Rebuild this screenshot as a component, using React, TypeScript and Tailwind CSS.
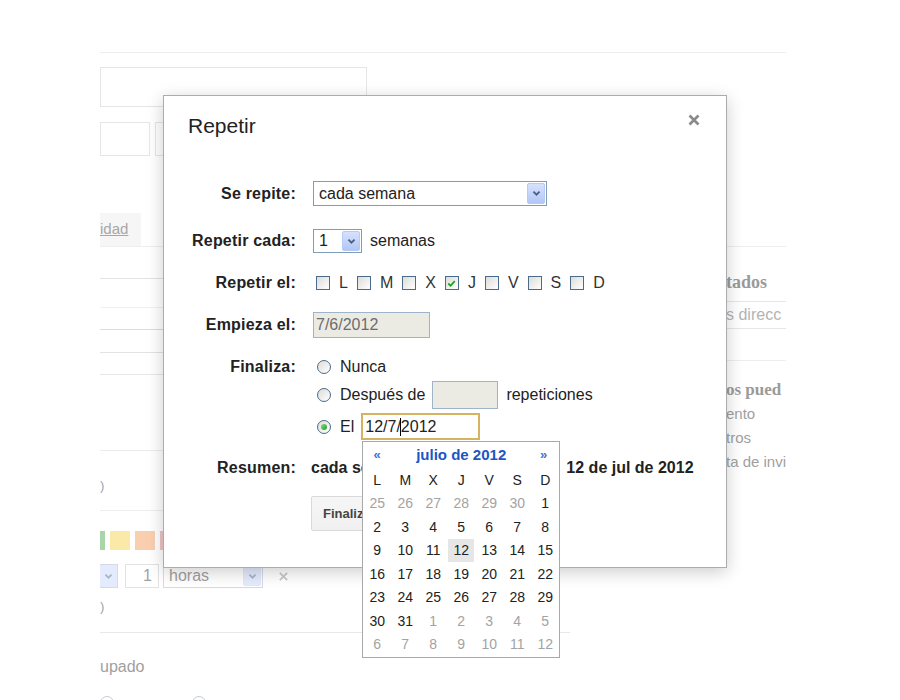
import clsx from "clsx";

const days: { n: number; muted?: boolean; today?: boolean }[][] = [
  [25, 26, 27, 28, 29, 30].map((n) => ({ n, muted: true })).concat([{ n: 1 }]),
  [2, 3, 4, 5, 6, 7, 8].map((n) => ({ n })),
  [9, 10, 11, 12, 13, 14, 15].map((n) => ({ n, today: n === 12 })),
  [16, 17, 18, 19, 20, 21, 22].map((n) => ({ n })),
  [23, 24, 25, 26, 27, 28, 29].map((n) => ({ n })),
  [{ n: 30 }, { n: 31 }].concat([1, 2, 3, 4, 5].map((n) => ({ n, muted: true }))),
  [6, 7, 8, 9, 10, 11, 12].map((n) => ({ n, muted: true })),
];

function Chevron({ className }: { className?: string }) {
  return (
    <svg viewBox="0 0 10 8" width="9" height="7" className={className}>
      <path d="M1.5 1.8 L5 5.3 L8.5 1.8" fill="none" stroke="currentColor" strokeWidth="2.2" />
    </svg>
  );
}

function XpSelect({ className, text, faded }: { className: string; text: string; faded?: boolean }) {
  return (
    <div className={clsx("flex items-stretch border bg-white p-px", faded ? "border-[#d4dbe6]" : "border-[#7f9db9]", className)}>
      <span className={clsx("flex flex-1 items-center pl-[4px] text-[16px]", faded ? "text-[#a0a0a0]" : "text-[#222]")}>{text}</span>
      <span
        className={clsx(
          "flex w-[18px] items-center justify-center rounded-[2px] border",
          faded
            ? "border-[#e0e8fb] bg-[#e4ebfd] text-[#aab6cc]"
            : "border-[#b7caf5] bg-gradient-to-b from-[#d6e1fe] to-[#b3c7f6] text-[#4d6185]"
        )}
      >
        <Chevron />
      </span>
    </div>
  );
}

function Checkbox({ checked }: { checked?: boolean }) {
  return (
    <span className="flex h-[14px] w-[14px] items-center justify-center border border-[#4b6b8c] bg-gradient-to-br from-[#dcdcd7] to-white">
      {checked && (
        <svg viewBox="0 0 12 12" width="11" height="11">
          <path d="M2.5 6 L5 8.5 L9.5 3.5" fill="none" stroke="#21a121" strokeWidth="2" />
        </svg>
      )}
    </span>
  );
}

function Radio({ checked }: { checked?: boolean }) {
  return (
    <span className="flex h-[14px] w-[14px] items-center justify-center rounded-full border border-[#4b6b8c] bg-gradient-to-br from-[#dcdcd7] to-white">
      {checked && <span className="h-[6px] w-[6px] rounded-full bg-gradient-to-br from-[#7be07b] to-[#1f9a1f]" />}
    </span>
  );
}

function Label({ children }: { children: string }) {
  return <div className="w-[132px] shrink-0 text-right text-[16px] font-bold tracking-[0.2px] text-[#222]">{children}</div>;
}

function Calendar() {
  return (
    <div className="absolute -left-[1px] top-[26px] z-10 w-[198px] border border-[#a9a9a9] bg-white">
      <div className="grid h-[26px] grid-cols-7 items-center text-center">
        <span className="text-[13px] font-bold text-[#3f72d0]">«</span>
        <span className="col-span-5 text-[15px] font-bold text-[#1c55c4]">julio de 2012</span>
        <span className="pr-[3px] text-[13px] font-bold text-[#3f72d0]">»</span>
      </div>
      <div className="grid h-[24px] grid-cols-7 items-center text-center text-[14px] text-[#222]">
        {["L", "M", "X", "J", "V", "S", "D"].map((d) => (
          <span key={d}>{d}</span>
        ))}
      </div>
      {days.map((week, i) => (
        <div key={i} className="grid h-[23.5px] grid-cols-7 text-center text-[14px]">
          {week.map((d, j) => (
            <span key={j} className="flex items-center justify-center">
              <span
                className={clsx(
                  "flex h-[23px] w-[26px] items-center justify-center",
                  d.muted ? "text-[#a3a3a3]" : "text-[#222]",
                  d.today && "bg-[#e6e6e6]"
                )}
              >
                {d.n}
              </span>
            </span>
          ))}
        </div>
      ))}
    </div>
  );
}

function Background() {
  return (
    <div className="pl-[100px] pt-[52px]">
      <div className="flex w-[686px] border-t border-[#eeeeee]">
        <div className="w-[470px] overflow-hidden text-[#9f9f9f]">
          <div className="mt-[14px] h-[40px] w-[267px] border border-[#e6e6e6]" />
          <div className="mt-[15px] flex gap-[5px]">
            <div className="h-[34px] w-[50px] border border-[#e6e6e6]" />
            <div className="h-[34px] w-[60px] border border-[#e6e6e6]" />
          </div>
          <div className="mt-[57px] h-[34px] border-b border-[#eeeeee]">
            <div className="flex h-full w-[41px] items-center bg-[#f6f6f6] text-[15px] text-[#a6a6a6] underline">idad</div>
          </div>
          <div className="h-[32px] border-b border-[#e3e3e3]" />
          <div className="h-[29px] border-b border-[#f0f0f0]" />
          <div className="h-[22px] border-b border-[#d7dde6]" />
          <div className="h-[23px] border-b border-[#e3e3e3]" />
          <div className="h-[22px] border-b border-[#e6e6e6]" />
          <div className="h-[76px] border-b border-[#ececec]" />
          <div className="h-[60px] border-b border-[#eeeeee] pt-[25px] text-[13px] leading-[20px] text-[#9aa3b5]">)</div>
          <div className="-ml-[15px] mt-[20px] flex gap-[5px]">
            <div className="h-[19px] w-[20px] bg-[#a8d6a8]" />
            <div className="h-[19px] w-[20px] bg-[#fbe9a7]" />
            <div className="h-[19px] w-[20px] bg-[#f9cfb0]" />
            <div className="h-[19px] w-[20px] bg-[#f0c4c4]" />
          </div>
          <div className="mt-[14px] flex h-[24px] items-stretch">
            <div className="flex w-[18px] items-center justify-center border-y border-r border-[#d4dbe6] bg-[#e4ebfd] text-[#aab6cc]">
              <Chevron />
            </div>
            <div className="ml-[7px] flex w-[34px] items-center justify-end border border-[#e2e2e2] pr-[6px] text-[16px]">1</div>
            <XpSelect className="ml-[4px] w-[100px]" text="horas" faded />
            <div className="ml-[15px] flex items-center">
              <svg viewBox="0 0 12 12" width="11" height="11">
                <path d="M2 2 L10 10 M10 2 L2 10" stroke="#c9c9c9" strokeWidth="2" />
              </svg>
            </div>
          </div>
          <div className="h-[45px] border-b border-[#e8e8e8] pt-[9px] text-[13px] leading-[20px] text-[#9aa3b5]">)</div>
          <div className="mt-[22px] text-[16px] leading-[24px]">upado</div>
          <div className="mt-[17px] flex gap-[78px]">
            <span className="h-[14px] w-[14px] rounded-full border border-[#c3cad6]" />
            <span className="h-[14px] w-[14px] rounded-full border border-[#c3cad6]" />
          </div>
        </div>
        <div className="ml-auto w-[60px] overflow-hidden whitespace-nowrap text-[#9f9f9f]">
          <div className="h-[194px] border-b border-[#eeeeee]" />
          <div className="h-[55px] border-b border-[#e6e6e6] pt-[23px] font-['Liberation_Serif',serif] text-[18px] font-bold leading-[24px] text-[#9a9a9a]">
            tados
          </div>
          <div className="h-[27px] border-b border-[#e6e6e6] text-[16px] leading-[26px] text-[#b3b3b3]">s direcc</div>
          <div className="h-[32px] border-b border-[#eeeeee]" />
          <div className="pt-[17px] text-[15px] leading-[24px]">
            <div className="font-['Liberation_Serif',serif] text-[17px] font-bold text-[#9a9a9a]">os pued</div>
            <div>ento</div>
            <div>tros</div>
            <div>ta de invi</div>
          </div>
        </div>
      </div>
    </div>
  );
}

export default function App() {
  return (
    <div className="relative h-[700px] w-[900px] overflow-hidden bg-white font-['Liberation_Sans',Arial,sans-serif]">
      <Background />

      <div className="absolute left-[163px] top-[95px] h-[473px] w-[564px] border border-[#acacac] bg-white shadow-[0_4px_16px_rgba(0,0,0,0.2)]">
        <div className="flex items-start justify-between pl-[24px] pr-[25px] pt-[18px]">
          <h2 className="text-[21px] leading-[24px] text-[#222]">Repetir</h2>
          <svg viewBox="0 0 14 14" width="14" height="14" className="-mt-[1px]">
            <path d="M2.5 2.5 L11.5 11.5 M11.5 2.5 L2.5 11.5" stroke="#8a8a8a" strokeWidth="2.6" />
          </svg>
        </div>

        <div className="mt-[43px] flex h-[25px] items-center">
          <Label>Se repite:</Label>
          <XpSelect className="ml-[17px] h-[25px] w-[234px]" text="cada semana" />
        </div>

        <div className="mt-[23px] flex h-[24px] items-center">
          <Label>Repetir cada:</Label>
          <XpSelect className="ml-[17px] h-[24px] w-[49px]" text="1" />
          <span className="ml-[8px] text-[16px] text-[#222]">semanas</span>
        </div>

        <div className="mt-[18px] flex h-[24px] items-center">
          <Label>Repetir el:</Label>
          <div className="ml-[20px] flex items-center text-[16px] text-[#333]">
            {["L", "M", "X", "J", "V", "S", "D"].map((d) => (
              <span key={d} className="flex items-center">
                <Checkbox checked={d === "J"} />
                <span className="ml-[9px] mr-[9px]">{d}</span>
              </span>
            ))}
          </div>
        </div>

        <div className="mt-[17px] flex h-[26px] items-center">
          <Label>Empieza el:</Label>
          <div className="ml-[17px] flex h-[26px] w-[117px] items-center border border-[#9fb3c9] bg-[#ebebe4] pl-[2px] text-[16px] text-[#6d6d6d]">
            7/6/2012
          </div>
        </div>

        <div className="mt-[17px] flex items-start">
          <div className="leading-[24px]">
            <Label>Finaliza:</Label>
          </div>
          <div className="ml-[21px] text-[16px] text-[#222]">
            <div className="flex h-[24px] items-center">
              <Radio />
              <span className="ml-[9px]">Nunca</span>
            </div>
            <div className="mt-[2px] flex h-[28px] items-center">
              <Radio />
              <span className="ml-[9px]">Después de</span>
              <div className="ml-[7px] h-[28px] w-[66px] border border-[#9fb3c9] bg-[#ebebe4]" />
              <span className="ml-[8px]">repeticiones</span>
            </div>
            <div className="mt-[4px] flex h-[27px] items-center">
              <Radio checked />
              <span className="ml-[9px]">El</span>
              <div className="relative ml-[7px] flex h-[27px] w-[119px] items-center border-2 border-[#d6b263] pl-[2px]">
                <span>12/7/</span>
                <span className="-ml-[1px] h-[18px] w-px bg-black" />
                <span>2012</span>
                <Calendar />
              </div>
            </div>
          </div>
        </div>

        <div className="mt-[16px] flex h-[24px] items-center">
          <Label>Resumen:</Label>
          <span className="ml-[15px] whitespace-nowrap text-[16px] font-bold text-[#222]">
            cada semana los jueves hasta el<span className="ml-[9px]">12 de jul de 2012</span>
          </span>
        </div>

        <div className="mt-[16px] flex">
          <div className="w-[132px]" />
          <button className="ml-[15px] h-[35px] rounded-[2px] border border-[#d9d9d9] bg-gradient-to-b from-[#f6f6f6] to-[#f0f0f0] px-[11px] text-[13px] font-bold text-[#444]">
            Finalizar
          </button>
        </div>
      </div>
    </div>
  );
}
